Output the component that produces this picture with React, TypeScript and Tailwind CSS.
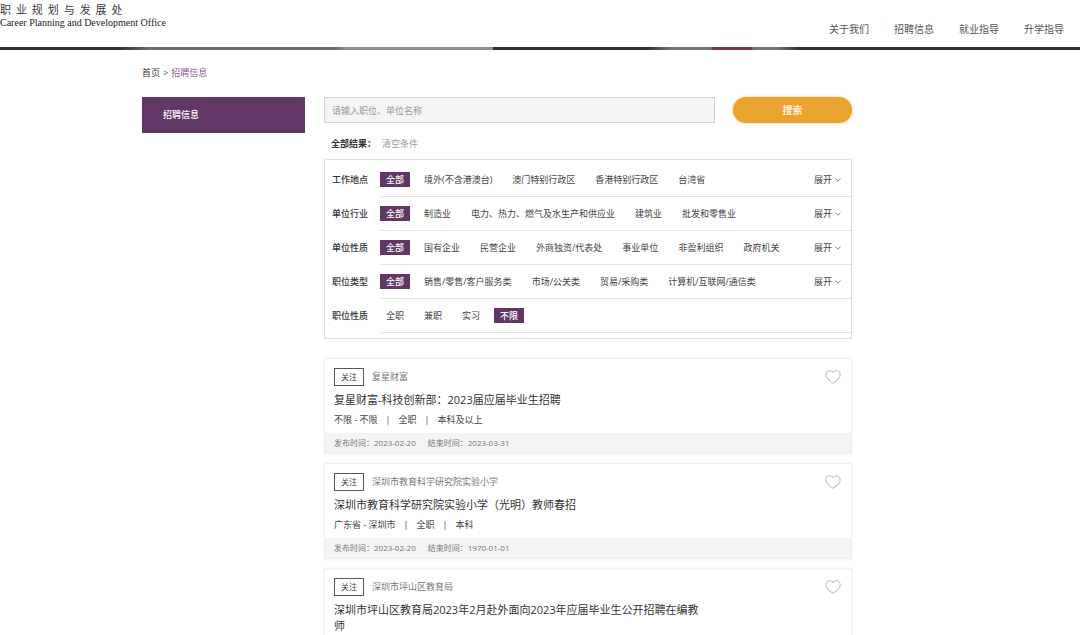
import { useState } from "react";

interface FilterGroup {
  label: string;
  options: string[];
  selected: string;
  expandable: boolean;
}

interface Job {
  id: number;
  company: string;
  title: string;
  meta?: string[];
  published?: string;
  ends?: string;
}

const navItems = ["关于我们", "招聘信息", "就业指导", "升学指导"];

const filterGroups: FilterGroup[] = [
  {
    label: "工作地点",
    options: ["全部", "境外(不含港澳台)", "澳门特别行政区", "香港特别行政区", "台湾省"],
    selected: "全部",
    expandable: true,
  },
  {
    label: "单位行业",
    options: ["全部", "制造业", "电力、热力、燃气及水生产和供应业", "建筑业", "批发和零售业"],
    selected: "全部",
    expandable: true,
  },
  {
    label: "单位性质",
    options: ["全部", "国有企业", "民营企业", "外商独资/代表处", "事业单位", "非盈利组织", "政府机关"],
    selected: "全部",
    expandable: true,
  },
  {
    label: "职位类型",
    options: ["全部", "销售/零售/客户服务类", "市场/公关类", "贸易/采购类", "计算机/互联网/通信类"],
    selected: "全部",
    expandable: true,
  },
  {
    label: "职位性质",
    options: ["全职", "兼职", "实习", "不限"],
    selected: "不限",
    expandable: false,
  },
];

const jobs: Job[] = [
  {
    id: 1,
    company: "复星财富",
    title: "复星财富-科技创新部：2023届应届毕业生招聘",
    meta: ["不限 - 不限", "全职", "本科及以上"],
    published: "2023-02-20",
    ends: "2023-03-31",
  },
  {
    id: 2,
    company: "深圳市教育科学研究院实验小学",
    title: "深圳市教育科学研究院实验小学（光明）教师春招",
    meta: ["广东省 - 深圳市", "全职", "本科"],
    published: "2023-02-20",
    ends: "1970-01-01",
  },
  {
    id: 3,
    company: "深圳市坪山区教育局",
    title: "深圳市坪山区教育局2023年2月赴外面向2023年应届毕业生公开招聘在编教师",
  },
];

function Header() {
  return (
    <header>
      <div className="flex h-[47px] justify-between pr-4">
        <div className="whitespace-pre text-[#3a3a3a]">
          <p className="pt-px font-['Noto_Sans_CJK_SC',serif] text-[11px] leading-4">
            {"职  业  规  划  与  发  展  处"}
          </p>
          <p className="font-['Liberation_Serif',serif] text-[10px] leading-3 text-[#222]">
            Career Planning and Development Office
          </p>
        </div>
        <nav className="flex gap-[25px] pt-[21px] text-[10px] leading-4">
          {navItems.map((item) => (
            <a key={item} href="#" className="text-[#555] hover:text-[#613765]">
              {item}
            </a>
          ))}
        </nav>
      </div>
      <div className="h-[3px] bg-[linear-gradient(90deg,#343136_0%,#343136_11%,#6f6c72_14%,#6f6c72_31%,#8f8c92_32%,#8f8c92_45.6%,#343136_45.7%,#343136_60%,#757277_62%,#757277_65.8%,#6d3a46_66%,#6d3a46_69.5%,#757277_69.8%,#757277_72%,#343136_74%)]" />
    </header>
  );
}

function FilterRow({ group }: { group: FilterGroup }) {
  const [selected, setSelected] = useState(group.selected);

  return (
    <div className="flex">
      <span className="w-12 shrink-0 font-medium leading-[34px] text-[#333]">{group.label}</span>
      <div className="flex h-[34px] flex-1 items-center justify-between border-b border-[#e2e2e2] pr-[10px]">
        <div className="flex gap-2">
          {group.options.map((option) => (
            <button
              key={option}
              type="button"
              onClick={() => setSelected(option)}
              className={`whitespace-nowrap px-[6px] leading-[15px] ${
                option === selected ? "bg-[#613765] font-medium text-white" : "text-[#444]"
              }`}
            >
              {option}
            </button>
          ))}
        </div>
        {group.expandable && (
          <button type="button" className="flex items-center gap-[3px] leading-[15px] text-[#444]">
            展开
            <svg width="6" height="4" viewBox="0 0 6 4" fill="none" stroke="#777">
              <path d="M0.5 0.5 3 3.2 5.5 0.5" strokeWidth="0.9" />
            </svg>
          </button>
        )}
      </div>
    </div>
  );
}

function JobCard({ job }: { job: Job }) {
  return (
    <article className="border border-[#efefef] bg-white shadow-[0_0_4px_rgba(0,0,0,0.04)]">
      <div className="px-[9px] pb-[5px] pt-[9px]">
        <div className="flex h-[18px] items-center">
          <button type="button" className="h-[18px] w-[30px] border border-[#5d5364] text-[8px] leading-4 text-[#444]">
            关注
          </button>
          <span className="ml-2 flex-1 text-[#777]">{job.company}</span>
          <button type="button" aria-label="收藏" className="mr-px">
            <svg width="16" height="14" viewBox="0 0 16 14" fill="none" stroke="#c4c4c4" strokeWidth="1.1">
              <path d="M8 2.3C7 1.1 5.9 0.8 4.6 0.8 2.4 0.8 0.8 2.6 0.8 5 0.8 8.5 4.4 10.6 7.2 12.8 7.7 13.2 8.3 13.2 8.8 12.8 11.6 10.6 15.2 8.5 15.2 5 15.2 2.6 13.6 0.8 11.4 0.8 10.1 0.8 9 1.1 8 2.3Z" />
            </svg>
          </button>
        </div>
        <h3 className="mt-[6px] max-w-[370px] text-[11px] leading-4 text-[#333]">
          <a href="#">{job.title}</a>
        </h3>
        {job.meta && (
          <p className="mt-1 flex leading-4 text-[#444]">
            {job.meta.map((m, i) => (
              <span key={m}>
                {i > 0 && <span className="px-2">|</span>}
                {m}
              </span>
            ))}
          </p>
        )}
      </div>
      {job.published && (
        <div className="flex gap-3 bg-[#f4f4f4] px-[9px] text-[8px] leading-5 text-[#777]">
          <span>发布时间：{job.published}</span>
          <span>结束时间：{job.ends}</span>
        </div>
      )}
    </article>
  );
}

export default function App() {
  const [keyword, setKeyword] = useState("");

  return (
    <div className="min-h-screen bg-white font-['Open_Sans','Noto_Sans_CJK_SC',sans-serif] text-[9px] text-[#444]">
      <Header />
      <main className="pl-[142px] pr-[228px] pt-[15px]">
        <p className="leading-4">
          <a href="#" className="text-[#333]">首页</a>
          <span className="px-[3px]">&gt;</span>
          <a href="#" className="text-[#8d5a92]">招聘信息</a>
        </p>

        <div className="mt-4 flex items-start gap-[19px]">
          <aside className="w-[163px] shrink-0 bg-[#613765]">
            <a href="#" className="block pl-[21px] font-medium leading-9 text-white">招聘信息</a>
          </aside>

          <section className="min-w-0 flex-1">
            <form className="flex gap-[18px]" onSubmit={(e) => e.preventDefault()}>
              <input
                aria-label="请输入职位、单位名称"
                placeholder="请输入职位、单位名称"
                value={keyword}
                onChange={(e) => setKeyword(e.target.value)}
                className="h-[26px] min-w-0 flex-1 border border-[#d2d2d2] bg-[#f5f5f5] px-[7px] placeholder:text-[#999]"
              />
              <button
                type="submit"
                className="h-[26px] w-[119px] rounded-full bg-[#eca430] text-[10px] font-medium text-white shadow-[0_0_3px_rgba(236,164,48,0.6)]"
              >
                搜索
              </button>
            </form>

            <div className="mt-[13px] flex gap-[6px] pl-[7px] leading-4">
              <span className="font-bold text-[#333]">全部结果：</span>
              <button type="button" className="text-[#999]" onClick={() => setKeyword("")}>
                清空条件
              </button>
            </div>

            <div className="mt-[7px] border border-[#dedede] pb-[5px] pl-[7px] pt-[3px]">
              {filterGroups.map((group) => (
                <FilterRow key={group.label} group={group} />
              ))}
            </div>

            <div className="mt-[19px] space-y-[9px]">
              {jobs.map((job) => (
                <JobCard key={job.id} job={job} />
              ))}
            </div>
          </section>
        </div>
      </main>
    </div>
  );
}
